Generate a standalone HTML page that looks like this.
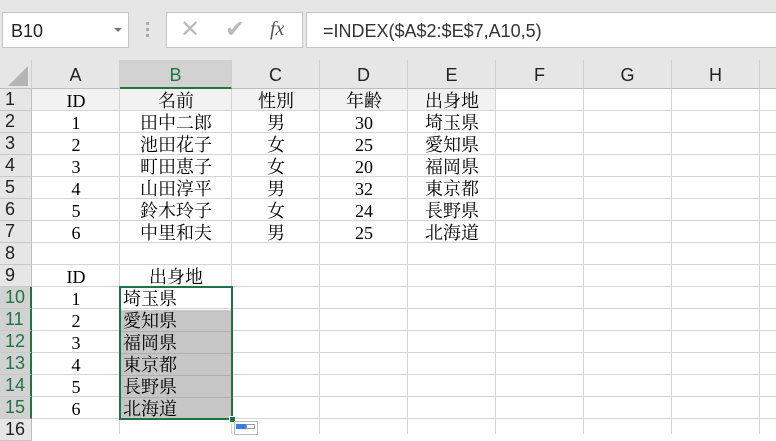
<!DOCTYPE html>
<html><head><meta charset="utf-8"><style>
*{margin:0;padding:0;box-sizing:border-box}
body{width:776px;height:434px;overflow:hidden;background:#fff;position:relative;font-family:"Liberation Sans",sans-serif}
.a{position:absolute}
.top{left:0;top:0;width:776px;height:60px;background:#e6e6e6}
.box{background:#fff;border:1px solid #c6c6c6}
.ch{top:60px;height:29px;background:#e6e6e6;border-right:1px solid #cfcfcf;border-bottom:1px solid #bdbdbd;text-align:center;font-size:18px;line-height:30px;color:#222}
.rh{left:0;width:32px;height:22px;background:#e6e6e6;border-bottom:1px solid #c8c8c8;border-right:1px solid #bdbdbd;font-size:18px;line-height:20px;padding-left:5px;color:#222}
.rh.s{background:#d2d2d2;color:#217346;border-right:2px solid #217346}
.v{top:89px;width:1px;height:345px;background:#d4d4d4}
.t{font-family:"Liberation Serif","Noto Serif CJK SC",serif;font-size:18px;height:22px;line-height:24px;text-align:center;color:#000}
.l{text-align:left;padding-left:3px}
</style></head><body>
<div class="a top"></div>
<div class="a box" style="left:2px;top:12px;width:127px;height:36px;font-size:18px;line-height:36px;padding-left:8px;color:#222">B10</div>
<div class="a" style="left:114px;top:28px;width:0;height:0;border-left:4px solid transparent;border-right:4px solid transparent;border-top:4px solid #777"></div>
<div class="a" style="left:146px;top:22px;width:3px;height:3px;background:#aaa;box-shadow:0 6px 0 #aaa,0 12px 0 #aaa"></div>
<div class="a box" style="left:166px;top:12px;width:137px;height:36px"></div>
<div class="a" style="left:180px;top:16px;font-size:24px;color:#bbb;line-height:28px">✕</div>
<div class="a" style="left:225px;top:16px;font-size:24px;color:#bbb;line-height:28px">✔</div>
<div class="a" style="left:270px;top:15px;font-family:'Liberation Serif',serif;font-style:italic;font-size:20px;color:#555;line-height:28px">fx</div>
<div class="a box" style="left:306px;top:12px;width:480px;height:36px;font-size:18px;line-height:36px;padding-left:16px;color:#333">=INDEX($A$2:$E$7,A10,5)</div>

<div class="a" style="left:0;top:60px;width:32px;height:29px;background:#e6e6e6;border-right:1px solid #cfcfcf;border-bottom:1px solid #bdbdbd"></div>
<div class="a" style="left:8px;top:66px;width:0;height:0;border-left:20px solid transparent;border-bottom:20px solid #b5b5b5"></div>
<div class="a ch" style="left:32px;width:88px">A</div>
<div class="a ch" style="left:120px;width:112px;background:#d2d2d2;border-bottom:2px solid #217346;color:#217346">B</div>
<div class="a ch" style="left:232px;width:88px">C</div>
<div class="a ch" style="left:320px;width:88px">D</div>
<div class="a ch" style="left:408px;width:88px">E</div>
<div class="a ch" style="left:496px;width:88px">F</div>
<div class="a ch" style="left:584px;width:88px">G</div>
<div class="a ch" style="left:672px;width:88px">H</div>
<div class="a ch" style="left:760px;width:30px"></div>

<div class="a" style="left:32px;top:89px;width:744px;height:345px;background:repeating-linear-gradient(to bottom,transparent 0,transparent 21px,#d4d4d4 21px,#d4d4d4 22px)"></div>
<div class="a" style="left:32px;top:89px;width:464px;height:21px;background:#f2f2f2"></div>
<div class="a" style="left:120px;top:310px;width:112px;height:110px;background:#c6c6c6;background-image:repeating-linear-gradient(to bottom,transparent 0,transparent 21px,#b0b0b0 21px,#b0b0b0 22px)"></div>
<div class="a v" style="left:119px"></div><div class="a v" style="left:231px"></div><div class="a v" style="left:319px"></div><div class="a v" style="left:407px"></div><div class="a v" style="left:495px"></div><div class="a v" style="left:583px"></div><div class="a v" style="left:671px"></div><div class="a v" style="left:759px"></div>

<div class="a rh" style="top:89px">1</div>
<div class="a rh" style="top:111px">2</div>
<div class="a rh" style="top:133px">3</div>
<div class="a rh" style="top:155px">4</div>
<div class="a rh" style="top:177px">5</div>
<div class="a rh" style="top:199px">6</div>
<div class="a rh" style="top:221px">7</div>
<div class="a rh" style="top:243px">8</div>
<div class="a rh" style="top:265px">9</div>
<div class="a rh s" style="top:287px">10</div>
<div class="a rh s" style="top:309px">11</div>
<div class="a rh s" style="top:331px">12</div>
<div class="a rh s" style="top:353px">13</div>
<div class="a rh s" style="top:375px">14</div>
<div class="a rh s" style="top:397px">15</div>
<div class="a rh" style="top:419px">16</div>

<div class="a t" style="left:32px;top:89px;width:88px">ID</div><div class="a t" style="left:120px;top:89px;width:112px">名前</div><div class="a t" style="left:232px;top:89px;width:88px">性別</div><div class="a t" style="left:320px;top:89px;width:88px">年齢</div><div class="a t" style="left:408px;top:89px;width:88px">出身地</div>
<div class="a t" style="left:32px;top:111px;width:88px">1</div><div class="a t" style="left:120px;top:111px;width:112px">田中二郎</div><div class="a t" style="left:232px;top:111px;width:88px">男</div><div class="a t" style="left:320px;top:111px;width:88px">30</div><div class="a t" style="left:408px;top:111px;width:88px">埼玉県</div>
<div class="a t" style="left:32px;top:133px;width:88px">2</div><div class="a t" style="left:120px;top:133px;width:112px">池田花子</div><div class="a t" style="left:232px;top:133px;width:88px">女</div><div class="a t" style="left:320px;top:133px;width:88px">25</div><div class="a t" style="left:408px;top:133px;width:88px">愛知県</div>
<div class="a t" style="left:32px;top:155px;width:88px">3</div><div class="a t" style="left:120px;top:155px;width:112px">町田恵子</div><div class="a t" style="left:232px;top:155px;width:88px">女</div><div class="a t" style="left:320px;top:155px;width:88px">20</div><div class="a t" style="left:408px;top:155px;width:88px">福岡県</div>
<div class="a t" style="left:32px;top:177px;width:88px">4</div><div class="a t" style="left:120px;top:177px;width:112px">山田淳平</div><div class="a t" style="left:232px;top:177px;width:88px">男</div><div class="a t" style="left:320px;top:177px;width:88px">32</div><div class="a t" style="left:408px;top:177px;width:88px">東京都</div>
<div class="a t" style="left:32px;top:199px;width:88px">5</div><div class="a t" style="left:120px;top:199px;width:112px">鈴木玲子</div><div class="a t" style="left:232px;top:199px;width:88px">女</div><div class="a t" style="left:320px;top:199px;width:88px">24</div><div class="a t" style="left:408px;top:199px;width:88px">長野県</div>
<div class="a t" style="left:32px;top:221px;width:88px">6</div><div class="a t" style="left:120px;top:221px;width:112px">中里和夫</div><div class="a t" style="left:232px;top:221px;width:88px">男</div><div class="a t" style="left:320px;top:221px;width:88px">25</div><div class="a t" style="left:408px;top:221px;width:88px">北海道</div>

<div class="a t" style="left:32px;top:265px;width:88px">ID</div><div class="a t" style="left:120px;top:265px;width:112px">出身地</div>
<div class="a t" style="left:32px;top:287px;width:88px">1</div><div class="a t l" style="left:120px;top:287px;width:112px">埼玉県</div>
<div class="a t" style="left:32px;top:309px;width:88px">2</div><div class="a t l" style="left:120px;top:309px;width:112px">愛知県</div>
<div class="a t" style="left:32px;top:331px;width:88px">3</div><div class="a t l" style="left:120px;top:331px;width:112px">福岡県</div>
<div class="a t" style="left:32px;top:353px;width:88px">4</div><div class="a t l" style="left:120px;top:353px;width:112px">東京都</div>
<div class="a t" style="left:32px;top:375px;width:88px">5</div><div class="a t l" style="left:120px;top:375px;width:112px">長野県</div>
<div class="a t" style="left:32px;top:397px;width:88px">6</div><div class="a t l" style="left:120px;top:397px;width:112px">北海道</div>

<div class="a" style="left:119px;top:286px;width:114px;height:134px;border:2px solid #217346"></div>
<div class="a" style="left:229px;top:416px;width:7px;height:7px;background:#217346;border:1px solid #fff"></div>
<div class="a" style="left:234px;top:421px;width:24px;height:14px;background:#fff;border:1px solid #bbb"></div>
<div class="a" style="left:236px;top:424px;width:10px;height:5px;background:#3b7ddd"></div>
<div class="a" style="left:246px;top:424px;width:9px;height:5px;border:1px solid #999"></div>
</body></html>
